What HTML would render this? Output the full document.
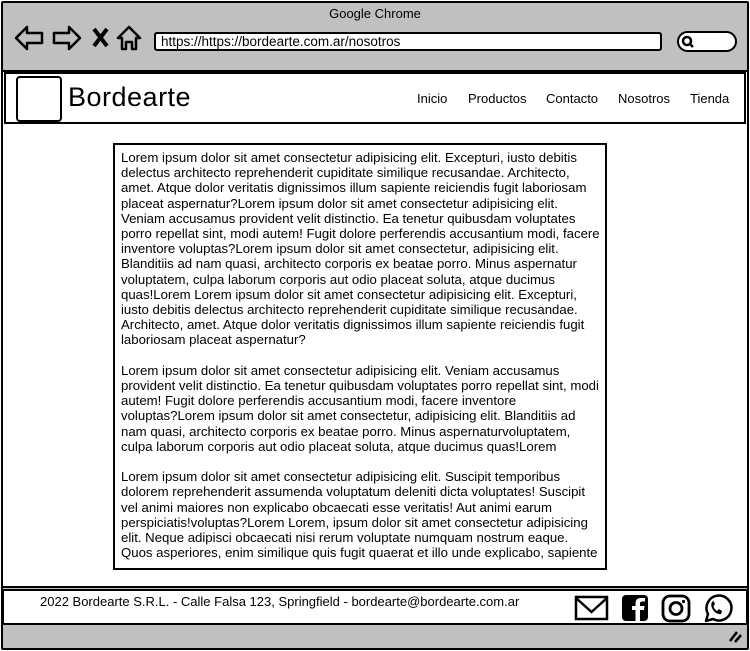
<!DOCTYPE html>
<html><head><meta charset="utf-8"><style>
*{margin:0;padding:0;box-sizing:border-box}
body{width:750px;height:651px;background:#fff;font-family:"Liberation Sans",sans-serif;color:#000;position:relative;overflow:hidden}
.abs{position:absolute}
.frame{left:1px;top:1px;width:748px;height:649px;border:2px solid #000;background:#c0c0c0;border-radius:2px}
.title{left:0;top:6px;width:750px;text-align:center;font-size:13px}
.url{left:154px;top:32px;width:508px;height:19px;border:2px solid #000;background:#fff;border-radius:3px;font-size:13.5px;padding:0 5px;line-height:15px}
.search{left:677px;top:31px;width:60px;height:21px;border:2px solid #000;border-radius:11px;background:#fff}
.page{left:3px;top:70px;width:744px;height:518px;background:#fff;border-top:2px solid #000;border-bottom:2px solid #000}
.nav{left:4px;top:72px;width:742px;height:52px;border:2px solid #000;background:#fff}
.logo{left:16px;top:76px;width:46px;height:46px;border:2px solid #000;border-radius:4px}
.brand{left:68px;top:82px;font-size:27px;letter-spacing:0.5px}
.menu{top:91px;font-size:13px}
.box{left:113px;top:143px;width:494px;height:427px;border:2px solid #000;overflow:hidden;padding:5px 6px;font-size:13.2px;line-height:15.2px;white-space:nowrap}
.foot{left:2px;top:589px;width:746px;height:36px;border:2px solid #000;background:#fff}
.ft{left:40px;top:594px;font-size:13px}
</style></head><body>
<div class="abs frame"></div>
<div class="abs title">Google Chrome</div>
<svg class="abs" style="left:14px;top:24px" width="130" height="28" viewBox="0 0 130 28" fill="none" stroke="#000" stroke-width="2.5" stroke-linejoin="round">
<path d="M2 14 L13 3 L13 9 L28 9 L28 19 L13 19 L13 25 Z"/>
<path d="M66 14 L55 3 L55 9 L40 9 L40 19 L55 19 L55 25 Z"/>
<path d="M80 5 L93 22 M93 5 L80 22" stroke-width="4"/>
<path d="M104 14 L115 3 L126 14 L122 14 L122 25 L118 25 L118 18 L112 18 L112 25 L108 25 L108 14 Z"/>
</svg>
<div class="abs url">https://https://bordearte.com.ar/nosotros</div>
<div class="abs search"></div>
<svg class="abs" style="left:681px;top:35px" width="14" height="14"><circle cx="6" cy="6" r="4" fill="none" stroke="#000" stroke-width="2.5"/><path d="M9 9 L12 12" stroke="#000" stroke-width="2.5"/></svg>
<div class="abs page"></div>
<div class="abs nav"></div>
<div class="abs logo"></div>
<div class="abs brand">Bordearte</div>
<div class="abs menu" style="left:417px">Inicio</div>
<div class="abs menu" style="left:468px">Productos</div>
<div class="abs menu" style="left:546px">Contacto</div>
<div class="abs menu" style="left:618px">Nosotros</div>
<div class="abs menu" style="left:690px">Tienda</div>
<div class="abs box">Lorem ipsum dolor sit amet consectetur adipisicing elit. Excepturi, iusto debitis<br>delectus architecto reprehenderit cupiditate similique recusandae. Architecto,<br>amet. Atque dolor veritatis dignissimos illum sapiente reiciendis fugit laboriosam<br>placeat aspernatur?Lorem ipsum dolor sit amet consectetur adipisicing elit.<br>Veniam accusamus provident velit distinctio. Ea tenetur quibusdam voluptates<br>porro repellat sint, modi autem! Fugit dolore perferendis accusantium modi, facere<br>inventore voluptas?Lorem ipsum dolor sit amet consectetur, adipisicing elit.<br>Blanditiis ad nam quasi, architecto corporis ex beatae porro. Minus aspernatur<br>voluptatem, culpa laborum corporis aut odio placeat soluta, atque ducimus<br>quas!Lorem Lorem ipsum dolor sit amet consectetur adipisicing elit. Excepturi,<br>iusto debitis delectus architecto reprehenderit cupiditate similique recusandae.<br>Architecto, amet. Atque dolor veritatis dignissimos illum sapiente reiciendis fugit<br>laboriosam placeat aspernatur?<br><br>Lorem ipsum dolor sit amet consectetur adipisicing elit. Veniam accusamus<br>provident velit distinctio. Ea tenetur quibusdam voluptates porro repellat sint, modi<br>autem! Fugit dolore perferendis accusantium modi, facere inventore<br>voluptas?Lorem ipsum dolor sit amet consectetur, adipisicing elit. Blanditiis ad<br>nam quasi, architecto corporis ex beatae porro. Minus aspernaturvoluptatem,<br>culpa laborum corporis aut odio placeat soluta, atque ducimus quas!Lorem<br><br>Lorem ipsum dolor sit amet consectetur adipisicing elit. Suscipit temporibus<br>dolorem reprehenderit assumenda voluptatum deleniti dicta voluptates! Suscipit<br>vel animi maiores non explicabo obcaecati esse veritatis! Aut animi earum<br>perspiciatis!voluptas?Lorem Lorem, ipsum dolor sit amet consectetur adipisicing<br>elit. Neque adipisci obcaecati nisi rerum voluptate numquam nostrum eaque.<br>Quos asperiores, enim similique quis fugit quaerat et illo unde explicabo, sapiente</div>
<div class="abs foot"></div>
<div class="abs ft">2022 Bordearte S.R.L. - Calle Falsa 123, Springfield - bordearte@bordearte.com.ar</div>
<svg class="abs" style="left:574px;top:592px" width="164" height="32" viewBox="0 0 164 32">
<rect x="2" y="5" width="31" height="22" fill="none" stroke="#000" stroke-width="2.5"/>
<path d="M2 6 L17.5 20 L33 6" fill="none" stroke="#000" stroke-width="2.5"/>
<rect x="48" y="3" width="26" height="26" rx="4" fill="#000"/>
<path d="M66 29 L66 18 L70 18 L70.5 14 L66 14 L66 11.5 Q66 9.5 68 9.5 L71 9.5 L71 6 L67 6 Q61.5 6 61.5 11.5 L61.5 14 L58 14 L58 18 L61.5 18 L61.5 29 Z" fill="#fff"/>
<rect x="89" y="4" width="26" height="25" rx="7" fill="none" stroke="#000" stroke-width="2.8"/>
<circle cx="102" cy="16.5" r="6" fill="none" stroke="#000" stroke-width="2.8"/>
<circle cx="109.5" cy="9.5" r="1.6" fill="#000"/>
<path d="M132 29 L134 22 A12.5 12.5 0 1 1 139 27 Z" fill="none" stroke="#000" stroke-width="2.5" stroke-linejoin="round"/>
<path d="M138 10 Q136 13 139 18 Q143 23 147 22 L148 19 L145 17 L143 19 Q140 17 139.5 14 L141 12 L139.5 9 Z" fill="#000"/>
</svg>
<svg class="abs" style="left:727px;top:628px" width="16" height="16"><path d="M3 13 L10 4 M8 14 L14 7" stroke="#000" stroke-width="2.5"/></svg>
</body></html>
